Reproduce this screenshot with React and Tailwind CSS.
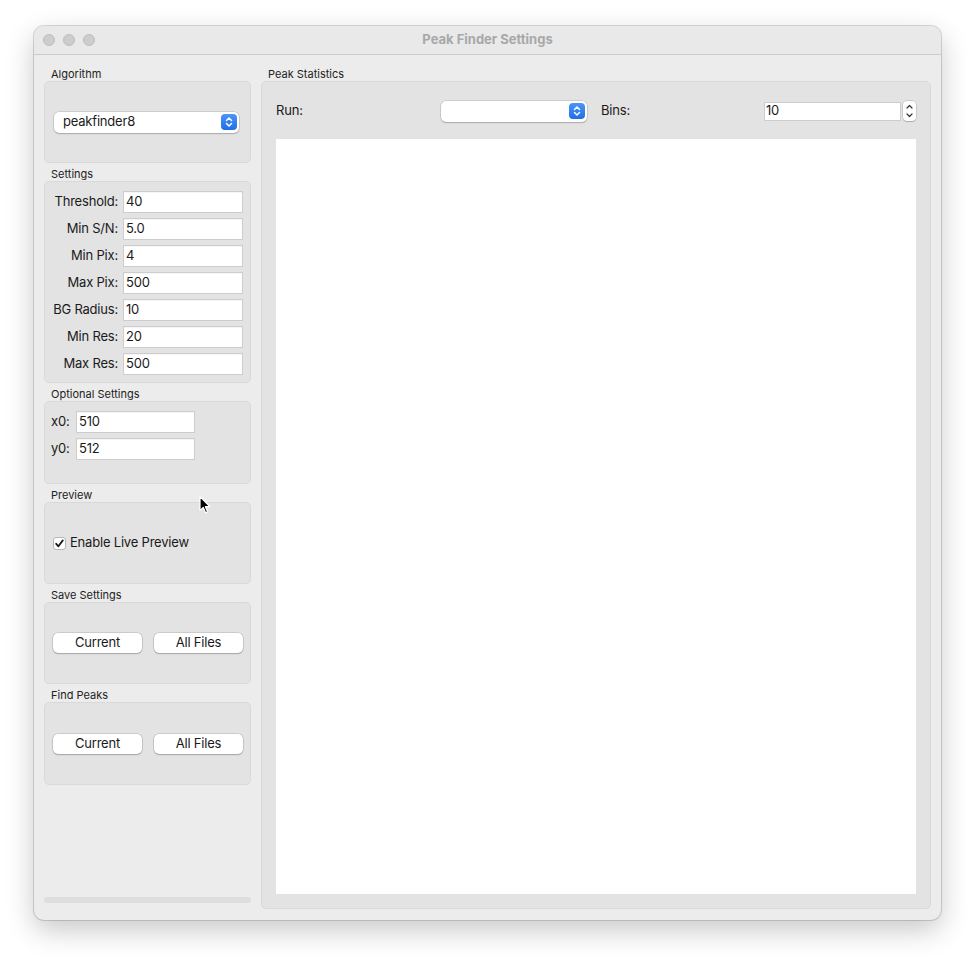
import React from 'react';

function Group({ title, className = '', children }) {
  return (
    <div className="flex flex-col">
      <div className="h-[18px] pl-[7px] pt-[4px] text-[11px] leading-[14px] tracking-normal text-[#222]">{title}</div>
      <div className={`rounded-[5px] border border-[#d9d9d9] bg-[#e3e3e3] ${className}`}>{children}</div>
    </div>
  );
}

function Field({ value, className = '' }) {
  return (
    <div className={`flex h-[22px] items-center border border-[#cdcdcd] bg-white pl-[2px] text-[13px] text-[#1a1a1a] shadow-[inset_0_1px_0_rgba(0,0,0,0.04)] ${className}`}>
      {value}
    </div>
  );
}

function UpDown() {
  return (
    <div className="flex h-[16px] w-[16px] items-center justify-center rounded-[4px] bg-gradient-to-b from-[#4a95f7] to-[#1f6fe6]">
      <svg width="16" height="16" viewBox="0 0 16 16" fill="none">
        <path d="M5.5 6.5 L8 4 L10.5 6.5" stroke="white" strokeWidth="1.5" strokeLinecap="round" strokeLinejoin="round" />
        <path d="M5.5 9.5 L8 12 L10.5 9.5" stroke="white" strokeWidth="1.5" strokeLinecap="round" strokeLinejoin="round" />
      </svg>
    </div>
  );
}

function Combo({ value, className = '' }) {
  return (
    <div className={`flex h-[21px] items-center justify-between rounded-[5px] bg-white pl-[9px] pr-[2px] text-[13px] text-[#1a1a1a] shadow-[0_0_0_0.5px_rgba(0,0,0,0.18),0_1px_1.5px_rgba(0,0,0,0.18)] ${className}`}>
      <span>{value}</span>
      <UpDown />
    </div>
  );
}

function Button({ children }) {
  return (
    <div className="flex h-[20px] w-[89px] items-center justify-center rounded-[5px] bg-white text-[13px] text-[#1a1a1a] shadow-[0_0_0_0.5px_rgba(0,0,0,0.2),0_1px_1.5px_rgba(0,0,0,0.2)]">
      {children}
    </div>
  );
}

const settings = [
  ['Threshold:', '40'],
  ['Min S/N:', '5.0'],
  ['Min Pix:', '4'],
  ['Max Pix:', '500'],
  ['BG Radius:', '10'],
  ['Min Res:', '20'],
  ['Max Res:', '500'],
];

export default function App() {
  return (
    <div className="relative min-h-screen bg-white pl-[34px] pt-[26px] font-['Inter','Liberation_Sans',sans-serif] tracking-[-0.2px] text-[#1a1a1a]">
      <div className="flex h-[894px] w-[907px] flex-col overflow-hidden rounded-[10px] bg-[#ececec] shadow-[0_0_0_1px_rgba(0,0,0,0.14),0_10px_28px_rgba(0,0,0,0.22)]">
        {/* title bar */}
        <div className="relative flex h-[29px] shrink-0 items-center border-b border-[#cbcbcb] bg-[#e9e9e9]">
          <div className="flex gap-[8px] pl-[9px]">
            <div className="h-[12px] w-[12px] rounded-full border border-[#bdbdbd] bg-[#cdcdcd]" />
            <div className="h-[12px] w-[12px] rounded-full border border-[#bdbdbd] bg-[#cdcdcd]" />
            <div className="h-[12px] w-[12px] rounded-full border border-[#bdbdbd] bg-[#cdcdcd]" />
          </div>
          <div className="absolute inset-0 flex items-center justify-center text-[13px] font-bold tracking-normal text-[#a8a8a8]">
            Peak Finder Settings
          </div>
        </div>

        {/* content */}
        <div className="flex flex-1 gap-[10px] pb-[11px] pl-[10px] pr-[10px] pt-[8px]">
          {/* left column */}
          <div className="flex w-[207px] flex-col">
            <Group title="Algorithm" className="flex h-[82px] items-center pl-[9px] pr-[11px]">
              <Combo value="peakfinder8" className="w-full" />
            </Group>

            <Group title="Settings" className="h-[202px] px-[7px] pt-[9px]">
              <div className="grid grid-cols-[66px_120px] gap-x-[5px] gap-y-[5px]">
                {settings.map(([label, value]) => (
                  <React.Fragment key={label}>
                    <div className="flex h-[22px] items-center justify-end whitespace-nowrap text-[13px]">{label}</div>
                    <Field value={value} />
                  </React.Fragment>
                ))}
              </div>
            </Group>

            <Group title="Optional Settings" className="h-[83px] pl-[6px] pt-[9px]">
              <div className="flex flex-col gap-[5px]">
                <div className="flex items-center gap-[5px]">
                  <span className="w-[20px] text-[13px]">x0:</span>
                  <Field value="510" className="w-[119px]" />
                </div>
                <div className="flex items-center gap-[5px]">
                  <span className="w-[20px] text-[13px]">y0:</span>
                  <Field value="512" className="w-[119px]" />
                </div>
              </div>
            </Group>

            <Group title="Preview" className="flex h-[82px] items-center pl-[8px]">
              <div className="flex items-center gap-[4px] text-[13px]">
                <div className="flex h-[13px] w-[13px] items-center justify-center rounded-[3px] border border-[#b5b5b5] bg-white">
                  <svg width="11" height="11" viewBox="0 0 11 11" fill="none">
                    <path d="M2.2 5.8 L4.4 8.3 L8.8 2.4" stroke="#1a1a1a" strokeWidth="1.8" strokeLinecap="round" strokeLinejoin="round" />
                  </svg>
                </div>
                <span>Enable Live Preview</span>
              </div>
            </Group>

            <Group title="Save Settings" className="flex h-[82px] items-center gap-[12px] pl-[8px]">
              <Button>Current</Button>
              <Button>All Files</Button>
            </Group>

            <Group title="Find Peaks" className="flex h-[83px] items-center gap-[12px] pl-[8px]">
              <Button>Current</Button>
              <Button>All Files</Button>
            </Group>

            <div className="flex-1" />
            <div className="mb-[6px] h-[6px] rounded-full bg-[#dedede]" />
          </div>

          {/* right column */}
          <div className="flex flex-1 flex-col">
            <div className="h-[18px] pl-[7px] pt-[4px] text-[11px] leading-[14px] tracking-normal text-[#222]">Peak Statistics</div>
            <div className="flex flex-1 flex-col rounded-[5px] border border-[#d9d9d9] bg-[#e3e3e3] px-[14px] pb-[14px] pt-[18px]">
              <div className="flex h-[22px] items-center text-[13px]">
                <span className="w-[165px]">Run:</span>
                <Combo value="" className="w-[146px]" />
                <span className="ml-[14px] w-[163px]">Bins:</span>
                <div className="flex h-[19px] w-[137px] items-center border border-[#cdcdcd] bg-white pl-[1px]">10</div>
                <div className="ml-[2px] flex h-[20px] w-[13px] items-center justify-center rounded-[4px] bg-white shadow-[0_0_0_0.5px_rgba(0,0,0,0.2),0_1px_1px_rgba(0,0,0,0.15)]">
                  <svg width="13" height="20" viewBox="0 0 13 20" fill="none">
                    <path d="M4 7 L6.5 4.5 L9 7" stroke="#333" strokeWidth="1.2" strokeLinecap="round" strokeLinejoin="round" />
                    <path d="M4 13 L6.5 15.5 L9 13" stroke="#333" strokeWidth="1.2" strokeLinecap="round" strokeLinejoin="round" />
                  </svg>
                </div>
              </div>
              <div className="mt-[17px] flex-1 bg-white" />
            </div>
          </div>
        </div>
      </div>

      {/* mouse pointer */}
      <svg className="absolute left-[198px] top-[495px]" width="14" height="20" viewBox="0 0 14 20">
        <path d="M2 1.5 L2 15.5 L5.3 12.4 L7.6 17.8 L9.6 16.9 L7.4 11.7 L11.8 11.5 Z" fill="black" stroke="white" strokeWidth="1.2" strokeLinejoin="round" />
      </svg>
    </div>
  );
}
